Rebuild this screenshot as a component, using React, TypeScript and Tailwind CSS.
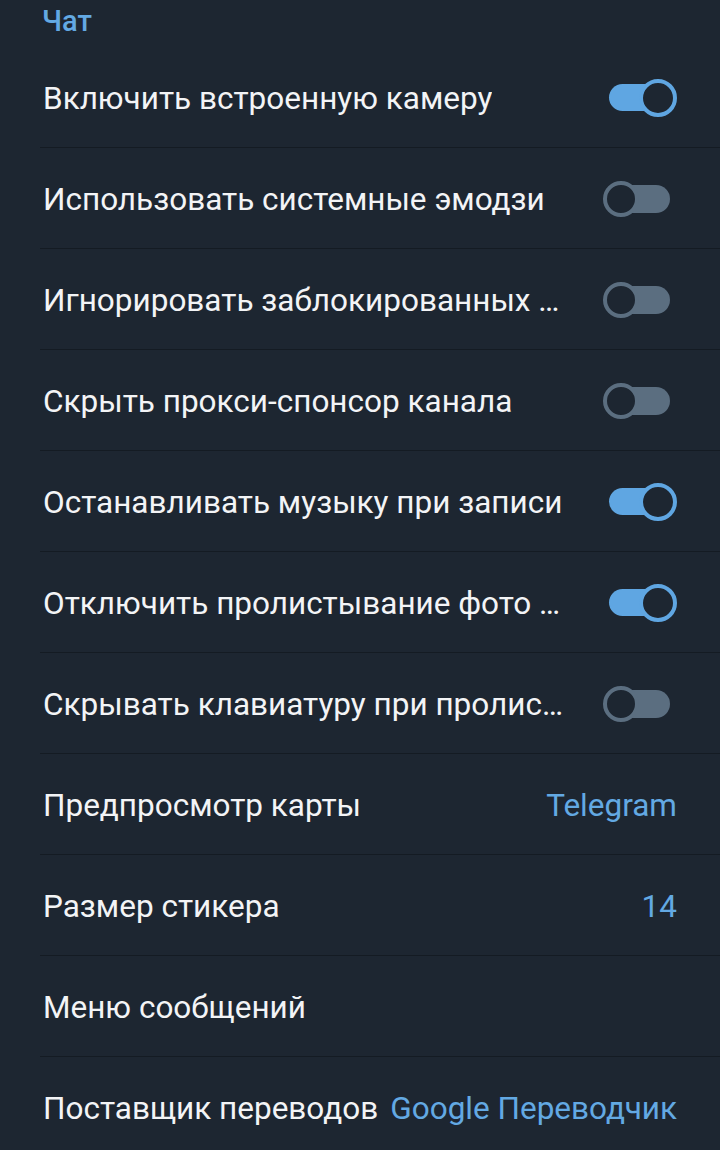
const FONT = "font-['Roboto','Liberation_Sans',sans-serif]";

type Row =
  | { label: string; kind: "toggle"; on: boolean }
  | { label: string; kind: "value"; value: string }
  | { label: string; kind: "plain" };

const rows: Row[] = [
  { label: "Включить встроенную камеру", kind: "toggle", on: true },
  { label: "Использовать системные эмодзи", kind: "toggle", on: false },
  { label: "Игнорировать заблокированных пользователей", kind: "toggle", on: false },
  { label: "Скрыть прокси-спонсор канала", kind: "toggle", on: false },
  { label: "Останавливать музыку при записи", kind: "toggle", on: true },
  { label: "Отключить пролистывание фото навсегда", kind: "toggle", on: true },
  { label: "Скрывать клавиатуру при пролистывании", kind: "toggle", on: false },
  { label: "Предпросмотр карты", kind: "value", value: "Telegram" },
  { label: "Размер стикера", kind: "value", value: "14" },
  { label: "Меню сообщений", kind: "plain" },
  { label: "Поставщик переводов", kind: "value", value: "Google Переводчик" },
];

// knob sits over the track; the track tucks under it with a negative margin
function Toggle({ on }: { on: boolean }) {
  return (
    <div className={`flex w-[74px] shrink-0 items-center ${on ? "justify-end" : "justify-start"}`}>
      {on ? (
        <>
          <div className="h-[27px] w-[44px] rounded-l-full bg-[#5fa6e2]" />
          <div className="relative -ml-[14px] h-[38px] w-[38px] rounded-full border-[4px] border-[#5fa6e2] bg-[#1d2631]" />
        </>
      ) : (
        <>
          <div className="relative z-10 h-[36px] w-[36px] rounded-full border-[4px] border-[#5b6e80] bg-[#1d2631]" />
          <div className="-ml-[14px] h-[28px] w-[45px] rounded-r-full bg-[#5b6e80]" />
        </>
      )}
    </div>
  );
}

export default function App() {
  return (
    <div className={`min-h-[1150px] w-[720px] bg-[#1d2631] ${FONT}`}>
      <div className="h-[47px] pl-[42px] text-[29px] font-medium leading-[42px] text-[#63a9e3]">Чат</div>
      {rows.map((row, i) => (
        <div
          key={i}
          className={`ml-[40px] flex h-[101px] items-center justify-between gap-[10px] pr-[43px] pt-[3px] ${
            i < rows.length - 1 ? "border-b border-[#141b23]" : ""
          }`}
        >
          <div className="min-w-0 truncate pl-[3px] text-[31.5px] text-[#f3f4f6]">{row.label}</div>
          {row.kind === "toggle" && (
            <div className="ml-[16px] pb-[2px]">
              <Toggle on={row.on} />
            </div>
          )}
          {row.kind === "value" && (
            <div className="shrink-0 text-[31.5px] text-[#63a9e3]">{row.value}</div>
          )}
        </div>
      ))}
    </div>
  );
}
